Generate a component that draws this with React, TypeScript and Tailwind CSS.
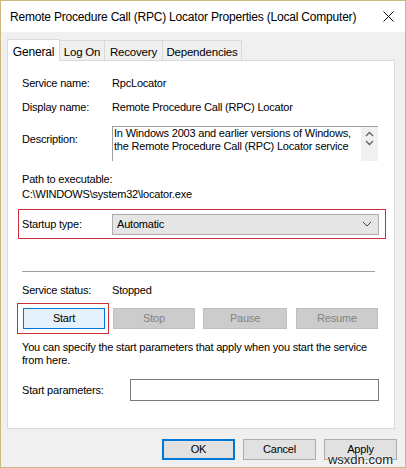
const font = { fontFamily: '"Liberation Sans", Arial, sans-serif' };

const Tab = ({ label, w, active }: { label: string; w: string; active?: boolean }) =>
  active ? (
    <div className={`${w} h-[22px] pt-[3px] text-center bg-white border border-b-0 border-[#d9d9d9] relative z-10 -mb-px text-[12px]`}>
      {label}
    </div>
  ) : (
    <div className={`${w} h-[20px] pt-[3px] text-center border border-b-0 border-l-0 border-[#d9d9d9] bg-[#f0f0f0] text-[11.5px]`}>
      {label}
    </div>
  );

const DisabledButton = ({ label, w }: { label: string; w: string }) => (
  <div className={`${w} h-[21px] bg-[#cccccc] border border-[#bfbfbf] text-[#838383] flex items-center justify-center`}>
    {label}
  </div>
);

const DialogButton = ({ label, primary }: { label: string; primary?: boolean }) => (
  <div
    className={
      primary
        ? "w-[73px] h-[21px] bg-[#e1e1e1] border-2 border-[#0078d7] flex items-center justify-center"
        : "w-[73px] h-[21px] bg-[#e1e1e1] border border-[#adadad] flex items-center justify-center"
    }
  >
    {label}
  </div>
);

export default function App() {
  return (
    <div
      className="w-[406px] h-[468px] bg-[#f0f0f0] border border-[#cdb97f] text-[11px] tracking-[-0.2px] text-black relative overflow-hidden"
      style={font}
    >
      {/* Title bar */}
      <div className="h-[31px] bg-white flex items-center justify-between pl-[9px] pr-[10px]">
        <span className="text-[12px]">Remote Procedure Call (RPC) Locator Properties (Local Computer)</span>
        <svg width="11" height="11" viewBox="0 0 11 11" className="mr-[1px]">
          <path d="M0.5 0.5 L10.5 10.5 M10.5 0.5 L0.5 10.5" stroke="#111" strokeWidth="1" />
        </svg>
      </div>

      {/* Tabs */}
      <div className="flex items-end mt-[6px] ml-[6px] h-[22px]">
        <Tab label="General" w="w-[53px]" active />
        <Tab label="Log On" w="w-[45px]" />
        <Tab label="Recovery" w="w-[58px]" />
        <Tab label="Dependencies" w="w-[79px]" />
      </div>

      {/* Panel */}
      <div className="ml-[6px] w-[388px] h-[369px] bg-white border border-[#d9d9d9] pl-[14px]">
        <div className="flex h-[16px] items-center mt-[14px]">
          <span className="w-[90px]">Service name:</span>
          <span>RpcLocator</span>
        </div>
        <div className="flex h-[16px] items-center mt-[8px]">
          <span className="w-[90px]">Display name:</span>
          <span>Remote Procedure Call (RPC) Locator</span>
        </div>
        <div className="flex mt-[11px]">
          <span className="w-[90px] pt-[5px]">Description:</span>
          <div className="w-[266px] h-[35px] border-l border-t border-[#a0a0a0] flex">
            <div className="flex-1 pl-[1px] leading-[13px]">
              In Windows 2003 and earlier versions of Windows, the Remote Procedure Call (RPC) Locator service
            </div>
            <div className="w-[17px] bg-[#f0f0f0] flex flex-col items-center pt-[4px] gap-[3px]">
              <svg width="9" height="6" viewBox="0 0 9 6">
                <path d="M1 5 L4.5 1.5 L8 5" stroke="#606060" strokeWidth="1.3" fill="none" />
              </svg>
              <svg width="9" height="6" viewBox="0 0 9 6">
                <path d="M1 1 L4.5 4.5 L8 1" stroke="#606060" strokeWidth="1.3" fill="none" />
              </svg>
            </div>
          </div>
        </div>
        <div className="mt-[11px] leading-[15px]">Path to executable:</div>
        <div className="leading-[15px]">C:\WINDOWS\system32\locator.exe</div>

        <div className="mt-[7px] -ml-[4px] w-[368px] h-[30px] border border-[#c8323a] flex items-center pl-[3px]">
          <span className="w-[90px]">Startup type:</span>
          <div className="w-[267px] h-[21px] bg-[#e5e5e5] border border-[#adadad] flex items-center justify-between pl-[4px] pr-[6px]">
            <span>Automatic</span>
            <svg width="10" height="6" viewBox="0 0 10 6">
              <path d="M1 1 L5 5 L9 1" stroke="#444" strokeWidth="1" fill="none" />
            </svg>
          </div>
        </div>

        <div className="mt-[32px] w-[353px] h-px bg-[#a0a0a0]" />

        <div className="flex h-[16px] items-center mt-[10px]">
          <span className="w-[90px]">Service status:</span>
          <span>Stopped</span>
        </div>

        <div className="flex items-center mt-[5px] -ml-[5px]">
          <div className="w-[92px] h-[31px] border border-[#c8323a] flex items-center pl-[5px]">
            <div className="w-[82px] h-[21px] bg-[#e5f1fb] border border-[#0078d7] flex items-center justify-center">
              Start
            </div>
          </div>
          <div className="ml-[4px]">
            <DisabledButton label="Stop" w="w-[82px]" />
          </div>
          <div className="ml-[8px]">
            <DisabledButton label="Pause" w="w-[84px]" />
          </div>
          <div className="ml-[9px]">
            <DisabledButton label="Resume" w="w-[82px]" />
          </div>
        </div>

        <div className="mt-[7px] leading-[13px] w-[360px]">
          You can specify the start parameters that apply when you start the service from here.
        </div>

        <div className="flex items-center mt-[12px]">
          <span className="w-[108px]">Start parameters:</span>
          <div className="w-[249px] h-[22px] bg-white border border-[#7a7a7a]" />
        </div>
      </div>

      {/* Dialog buttons */}
      <div className="flex justify-end gap-[8px] mt-[10px] pr-[8px]">
        <DialogButton label="OK" primary />
        <DialogButton label="Cancel" />
        <DialogButton label="Apply" />
      </div>

      {/* watermark */}
      <div className="absolute right-[12px] bottom-[0px] text-[13px] leading-[15px] tracking-normal text-[#222] [text-shadow:0_0_2px_#fff,0_0_2px_#fff]">
        wsxdn.com
      </div>
    </div>
  );
}
